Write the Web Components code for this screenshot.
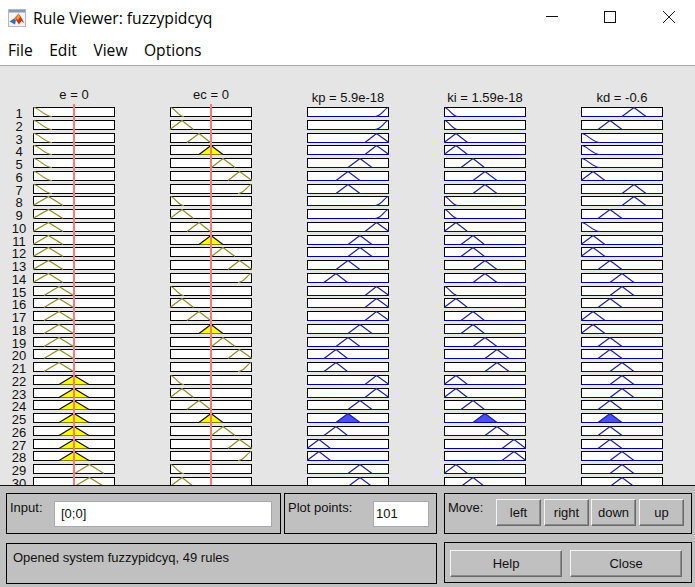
<!DOCTYPE html>
<html>
<head>
<meta charset="utf-8">
<title>Rule Viewer: fuzzypidcyq</title>
<style>
    html, body { margin: 0; padding: 0; width: 695px; height: 587px; overflow: hidden; background: #fff; }
</style>
</head>
<body>
<rule-viewer></rule-viewer>
<script>
// membership functions per column, offsets are in box pixels
const E_MF = { z: ['z', 19], a: [0, 15.5, 30], b: [11, 26, 40.5], c: [26, 41, 56], d: [41.5, 56.5, 71] }
const EC_MF = { z: ['z', 14], a: [0, 12, 23.5], b: [17, 29, 40.5], c: [29, 41, 53], d: [41.5, 53, 65], e: [58, 69.5, 82], f: ['s', 14] }
const KP_MF = { a: [0, 12, 23.5], b: [17, 29, 40.5], c: [29, 41, 53], d: [41, 53, 65], e: [58, 69.5, 82], f: ['s', 14] }
const KI_MF = { z: ['z', 14], a: [0, 12, 23.5], b: [17, 29, 40.5], c: [29, 41, 53], d: [41, 53, 65], e: [58, 70, 82] }
const KD_MF = { z: ['z', 19], a: [0, 12, 24], b: [17, 29, 41], c: [29, 41, 53], d: [41, 53, 65] }

const COLUMNS = [
    { label: 'e = 0', mfs: E_MF, rows: 'zzzzzzzaaaaaaabbbbbbbcccccccdd' },
    { label: 'ec = 0', mfs: EC_MF, rows: 'zabcdefzabcdefzabcdefzabcdefza' },
    { label: 'kp = 5.9e-18', out: true, mfs: KP_MF, rows: 'ffeedccffeddcbeeedcbbeedcbaadd' },
    { label: 'ki = 1.59e-18', out: true, mfs: KI_MF, rows: 'zzaabcczzabbcczabbcddaabcdeeab' },
    { label: 'kd = -0.6', out: true, mfs: KD_MF, rows: 'dbzzzaddbzaabccbaabbcccbbbbccc' }
]

class TitleBar extends HTMLElement {
    constructor() {
        super()
        this.shadowDOM = this.attachShadow({ mode: 'open' })
    }

    connectedCallback() {
        this.shadowDOM.innerHTML = `
            <style>
                :host { display: flex; align-items: center; height: 36px; background: #fff; }
                .logo { margin-left: 8px; flex: none; }
                .name { margin-left: 7px; font: 15.7px "Open Sans", "Noto Sans", sans-serif; color: #000; }
                .ctl { margin-left: auto; display: flex; }
                .ctl svg { display: block; }
            </style>
            <svg class="logo" width="18" height="18" viewBox="0 0 18 18">
                <rect x="0.5" y="0.5" width="17" height="17" fill="#f4f4f4" stroke="#b4b8bc"/>
                <rect x="1" y="1" width="16" height="2.5" fill="#7f9db5"/>
                <path d="M1.5 12.5 L6 9.5 L8 11 L7 15.5 Z" fill="#3d6fb0"/>
                <path d="M6 9.5 L10.5 4.5 L12 8 L8 11 Z" fill="#e8742a"/>
                <path d="M10.5 4.5 L13 8 L16.5 14.5 L13.5 12 L11 15.5 L8 11 Z" fill="#c8341c"/>
                <path d="M10.5 4.5 L12 8 L10 11 L8.5 9.5 Z" fill="#f2a33a"/>
            </svg>
            <span class="name"><slot></slot></span>
            <svg class="ctl" width="149" height="36" viewBox="0 0 149 36">
                <path d="M0 16.5 H12" stroke="#111" fill="none"/>
                <rect x="58.5" y="11.5" width="11" height="11" stroke="#111" fill="none"/>
                <path d="M117 11 L129 23 M129 11 L117 23" stroke="#222" fill="none"/>
            </svg>
        `
    }
}

class MenuBar extends HTMLElement {
    constructor() {
        super()
        this.shadowDOM = this.attachShadow({ mode: 'open' })
    }

    connectedCallback() {
        this.shadowDOM.innerHTML = `
            <style>
                :host {
                    display: flex; align-items: center; box-sizing: border-box;
                    height: 30px; padding: 0 0 1px 8px; gap: 16.5px;
                    background: #fff; border-bottom: 1px solid #a9a9a9;
                    font: 15.6px "Open Sans", "Noto Sans", sans-serif; color: #000;
                }
            </style>
            <slot></slot>
        `
    }
}

class MfBox extends HTMLElement {
    constructor() {
        super()
        this.shadowDOM = this.attachShadow({ mode: 'open' })
    }

    connectedCallback() {
        const mf = this.mf
        const out = this.out
        const lit = this.lit
        const line = out ? '#1e1e9c' : '#8f8a24'
        let d
        if (mf[0] === 'z') {
            d = `M0.5 0.5 C${mf[1] * 0.3} 0.5 ${mf[1] * 0.6} 9.5 ${mf[1]} 9.5`
        } else if (mf[0] === 's') {
            const x = 82 - mf[1]
            d = `M${x} 9.5 C${x + mf[1] * 0.5} 9.5 ${x + mf[1] * 0.7} 0.5 81.5 0.5`
        } else {
            d = `M${mf[0]} 9.5 L${mf[1]} 0.5 L${mf[2]} 9.5`
        }
        const fill = lit ? `<path d="${d} Z" fill="${out ? '#4a50f5' : '#ffff00'}"/>` : ''
        const stroke = lit ? (out ? '#1e1e9c' : '#111') : line
        const base = out ? `<path d="M0 9.5 H82" stroke="#00009a"/>` : ''
        this.shadowDOM.innerHTML = `
            <style>
                :host { display: block; width: 82px; height: 10px; }
                svg { display: block; }
            </style>
            <svg width="82" height="10" viewBox="0 0 82 10">
                <rect x="0.5" y="0.5" width="81" height="9" fill="#fff" stroke="#000"/>
                ${fill}
                ${base}
                <path d="${d}" fill="none" stroke="${stroke}" stroke-width="1.2"/>
            </svg>
        `
    }
}

class RuleRow extends HTMLElement {
    constructor() {
        super()
        this.shadowDOM = this.attachShadow({ mode: 'open' })
    }

    connectedCallback() {
        this.shadowDOM.innerHTML = `
            <style>
                :host { display: flex; height: 12.75px; }
                .num {
                    box-sizing: border-box; width: 33px; height: 12.75px; padding: 1px 0 0 5px; text-align: center;
                    font: 13px/11.75px "Liberation Sans", Arial, sans-serif; color: #111;
                }
                .cells { display: flex; gap: 55px; }
            </style>
            <div class="num">${this.index}</div>
            <div class="cells"></div>
        `
        const cells = this.shadowDOM.querySelector('.cells')
        COLUMNS.forEach((col, c) => {
            const box = document.createElement('mf-box')
            box.mf = col.mfs[col.rows[this.index - 1]]
            box.out = !!col.out
            // the e/ec terms around 0 fire, outputs are only filled on rule 25
            box.lit = c < 2 ? col.rows[this.index - 1] === 'c' : this.index === 25
            cells.appendChild(box)
        })
    }
}

class RulePlot extends HTMLElement {
    constructor() {
        super()
        this.shadowDOM = this.attachShadow({ mode: 'open' })
    }

    connectedCallback() {
        const heads = COLUMNS.map(c => `<div class="head ${c.out ? 'out' : ''}">${c.label}</div>`).join('')
        this.shadowDOM.innerHTML = `
            <style>
                :host {
                    display: block; position: relative; overflow: hidden; height: 419px;
                    background: #e5e5e5; color: #111;
                }
                .heads { display: flex; gap: 55px; height: 41px; padding-left: 33px; box-sizing: border-box; }
                .head {
                    width: 82px; white-space: nowrap; display: flex; justify-content: center;
                    padding-top: 21px; font: 13px/15px "Liberation Sans", Arial, sans-serif;
                }
                .head.out { padding-top: 24px; }
                .cursor { position: absolute; top: 38px; bottom: 0; width: 2px; background: #f97a7a; }
            </style>
            <div class="heads">${heads}</div>
            <div class="rows"></div>
            <div class="cursor" style="left:73px"></div>
            <div class="cursor" style="left:210px"></div>
        `
        const rows = this.shadowDOM.querySelector('.rows')
        for (let i = 1; i <= 30; i++) {
            const row = document.createElement('rule-row')
            row.index = i
            rows.appendChild(row)
        }
    }
}

class CtlPanel extends HTMLElement {
    constructor() {
        super()
        this.shadowDOM = this.attachShadow({ mode: 'open' })
    }

    connectedCallback() {
        this.shadowDOM.innerHTML = `
            <style>
                :host {
                    display: flex; box-sizing: border-box; height: 41px; border: 1px solid #000;
                    background: #c0c0c0; padding: 0 0 0 3px;
                    font: 13px/14px "Liberation Sans", Arial, sans-serif; color: #111;
                }
            </style>
            <slot></slot>
        `
    }
}

class TextField extends HTMLElement {
    constructor() {
        super()
        this.shadowDOM = this.attachShadow({ mode: 'open' })
    }

    connectedCallback() {
        this.shadowDOM.innerHTML = `
            <style>
                :host {
                    display: flex; align-items: center; box-sizing: border-box; height: 26px; margin-top: 7px;
                    background: #fff; border: 1px solid #a9a9b4; padding-left: 6px;
                }
            </style>
            <slot></slot>
        `
    }
}

class CtlButton extends HTMLElement {
    constructor() {
        super()
        this.shadowDOM = this.attachShadow({ mode: 'open' })
    }

    connectedCallback() {
        this.shadowDOM.innerHTML = `
            <style>
                :host {
                    display: flex; align-items: center; justify-content: center; box-sizing: border-box;
                    background: #c0c0c0; color: #111;
                    border: 1px solid; border-color: #f4f4f4 #6a6a6a #6a6a6a #f4f4f4;
                    box-shadow: inset -1px -1px 0 #8c8c8c;
                }
            </style>
            <slot></slot>
        `
    }
}

class RuleViewer extends HTMLElement {
    constructor() {
        super()
        this.shadowDOM = this.attachShadow({ mode: 'open' })
    }

    connectedCallback() {
        this.shadowDOM.innerHTML = `
            <style>
                :host { display: block; width: 695px; height: 587px; overflow: hidden; }
                .controls {
                    box-sizing: border-box; height: 102px; background: #c0c0c0; border-top: 1px solid #111;
                    display: flex; gap: 7px; padding: 7px 0 0 6px;
                }
                .left { width: 431px; display: flex; flex-direction: column; gap: 9px; }
                .right { width: 248px; display: flex; flex-direction: column; gap: 8px; }
                .top { display: flex; gap: 3px; }
                .lbl { padding-top: 7px; white-space: nowrap; }
                #input { width: 275px; }
                #input .lbl { width: 44px; }
                #input text-field { width: 218px; }
                #plot { width: 153px; }
                #plot .lbl { width: 85px; }
                #plot text-field { width: 56px; padding-left: 2px; }
                #move { gap: 3px; }
                #move .lbl { width: 45px; }
                .btns { display: flex; gap: 3px; margin-top: 5px; height: 27px; }
                .btns ctl-button { width: 45px; }
                .btns ctl-button:nth-child(3) { margin-left: -1px; }
                #status { padding-left: 6px; }
                #help { padding: 7px 0 0 5px; }
                #help .btns { margin: 0; gap: 8px; }
                #help ctl-button { width: 112px; }
            </style>
            <title-bar>Rule Viewer: fuzzypidcyq</title-bar>
            <menu-bar><span>File</span><span>Edit</span><span>View</span><span>Options</span></menu-bar>
            <rule-plot></rule-plot>
            <div class="controls">
                <div class="left">
                    <div class="top">
                        <ctl-panel id="input"><div class="lbl">Input:</div><text-field>[0;0]</text-field></ctl-panel>
                        <ctl-panel id="plot"><div class="lbl">Plot points:</div><text-field>101</text-field></ctl-panel>
                    </div>
                    <ctl-panel id="status"><div class="lbl">Opened system fuzzypidcyq, 49 rules</div></ctl-panel>
                </div>
                <div class="right">
                    <ctl-panel id="move">
                        <div class="lbl">Move:</div>
                        <div class="btns">
                            <ctl-button>left</ctl-button><ctl-button>right</ctl-button><ctl-button>down</ctl-button><ctl-button>up</ctl-button>
                        </div>
                    </ctl-panel>
                    <ctl-panel id="help">
                        <div class="btns"><ctl-button>Help</ctl-button><ctl-button>Close</ctl-button></div>
                    </ctl-panel>
                </div>
            </div>
        `
    }
}

customElements.define('title-bar', TitleBar)
customElements.define('menu-bar', MenuBar)
customElements.define('mf-box', MfBox)
customElements.define('rule-row', RuleRow)
customElements.define('rule-plot', RulePlot)
customElements.define('ctl-panel', CtlPanel)
customElements.define('text-field', TextField)
customElements.define('ctl-button', CtlButton)
customElements.define('rule-viewer', RuleViewer)
</script>
</body>
</html>
